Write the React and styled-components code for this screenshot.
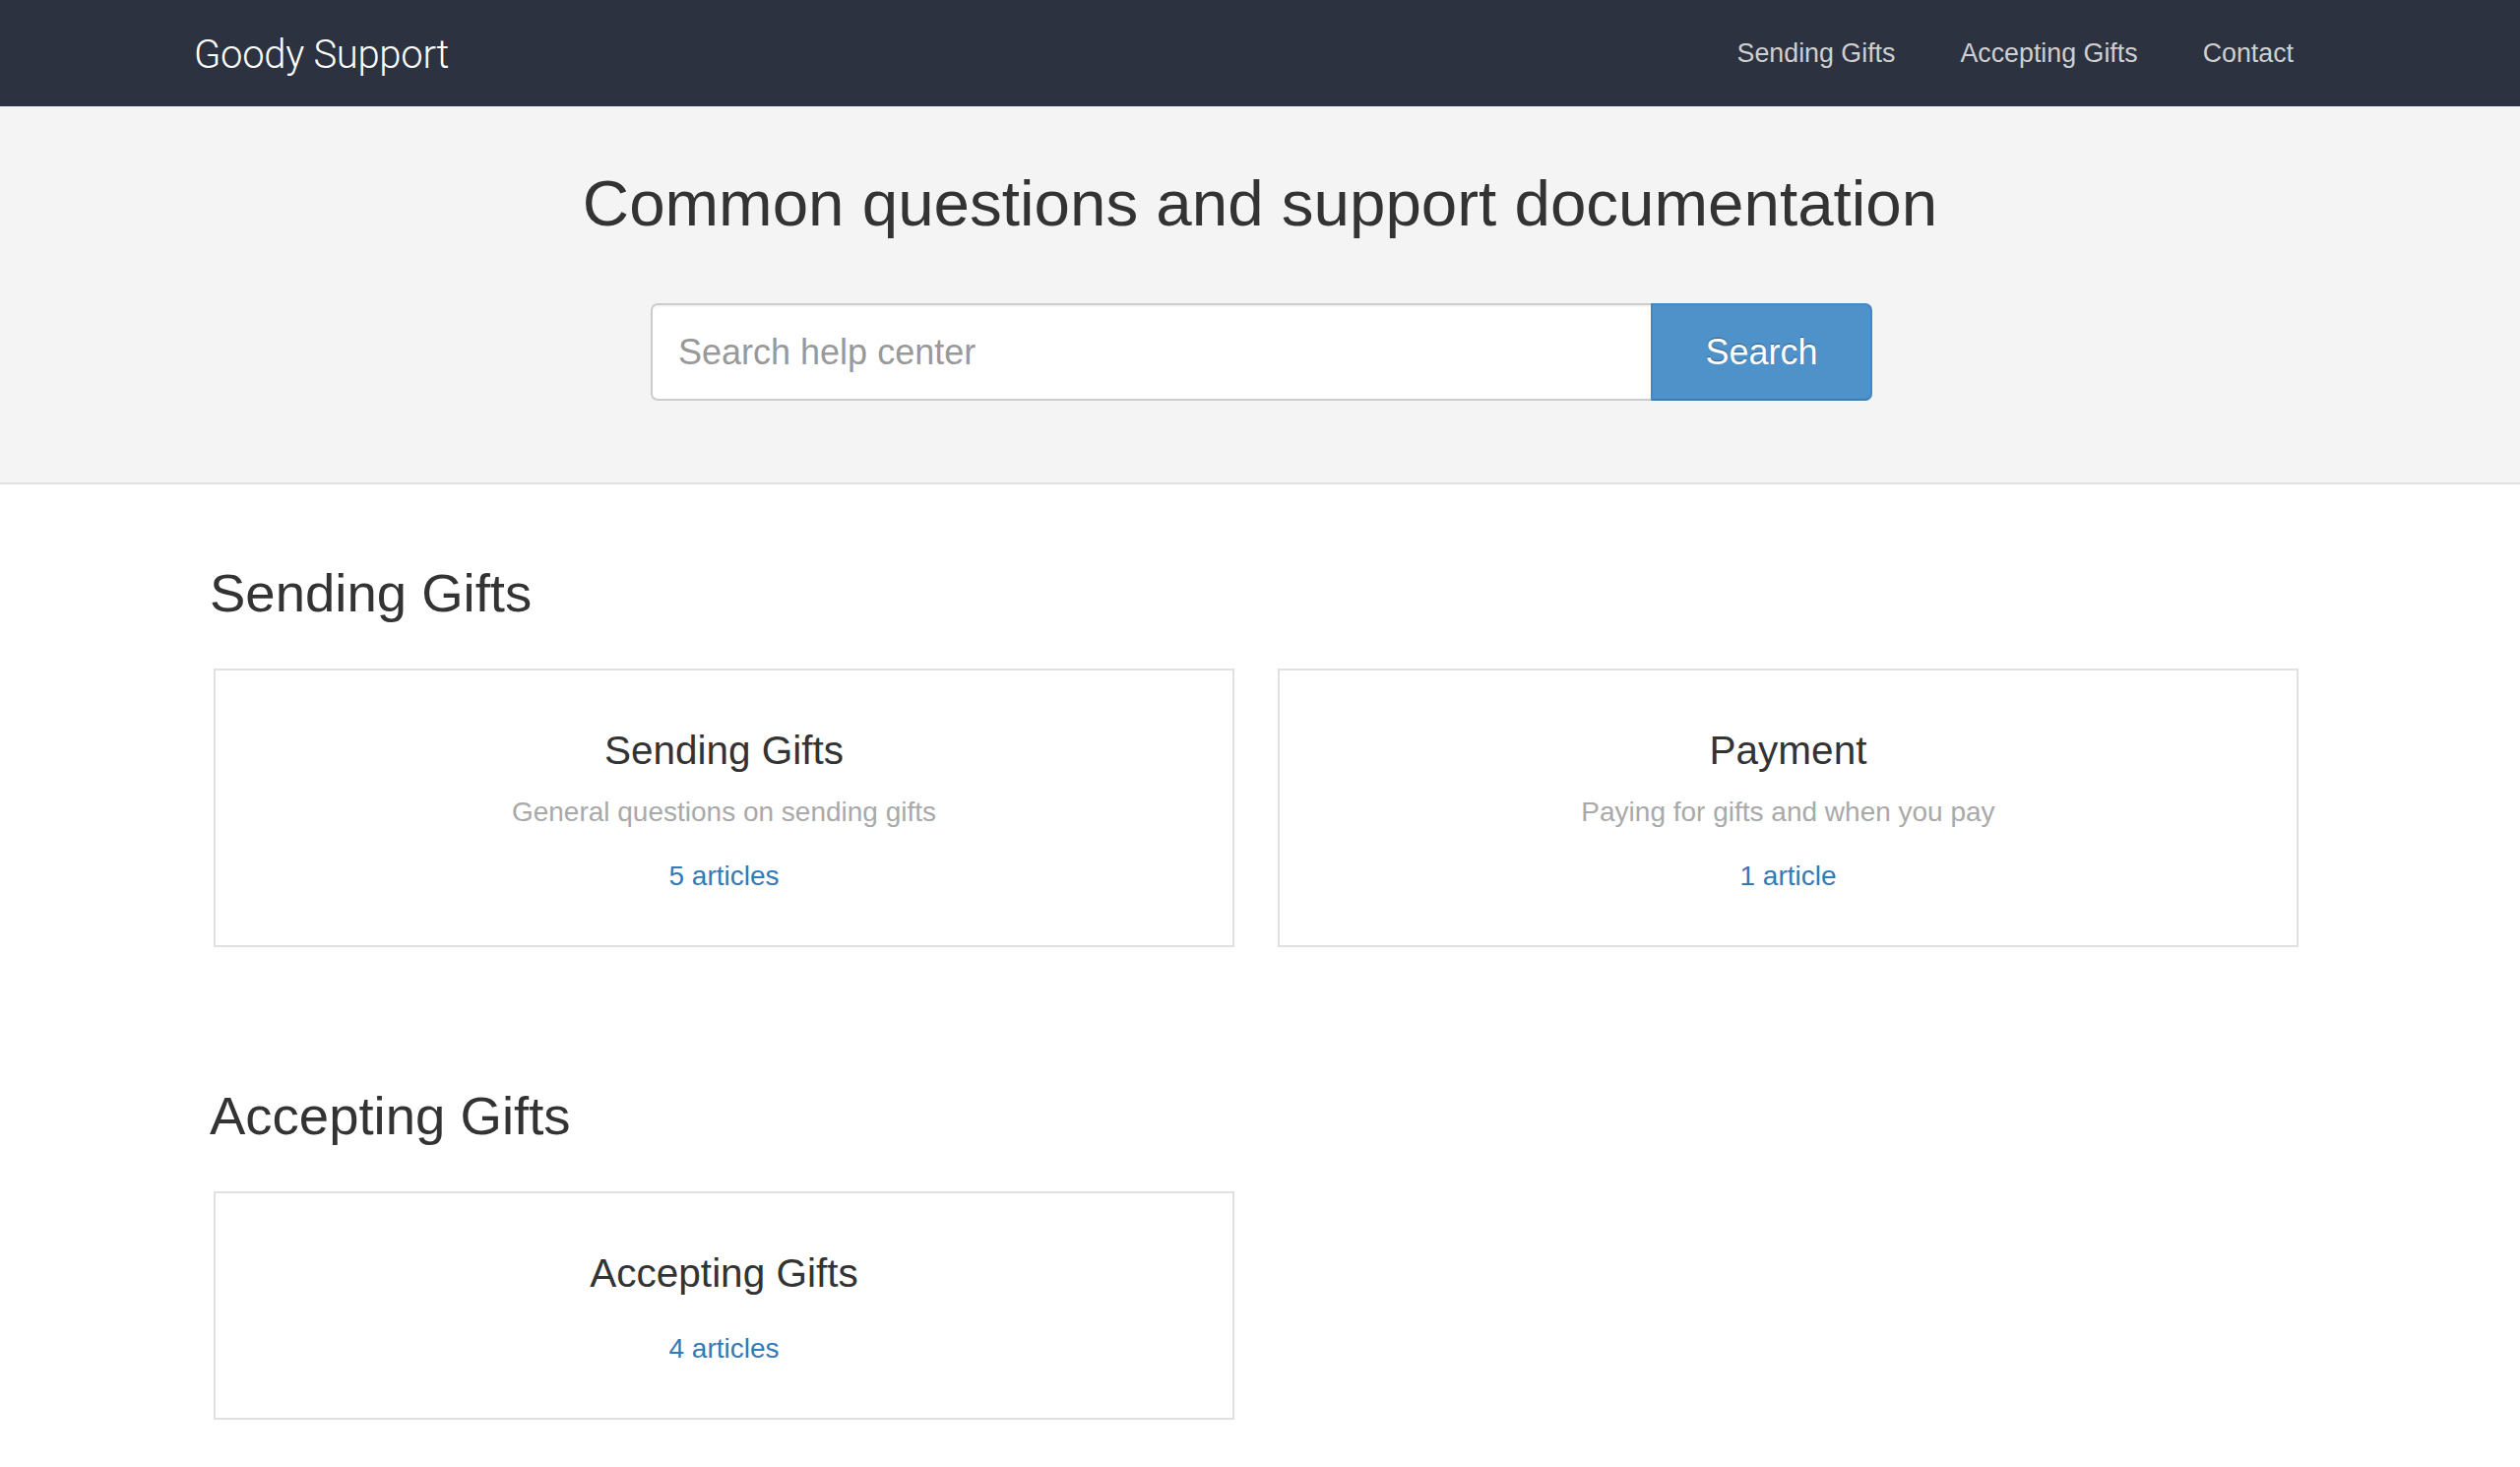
import React from "react";
import styled, { createGlobalStyle } from "styled-components";

const Global = createGlobalStyle`
  html, body { margin: 0; padding: 0; background: #fff; }
  body { font-family: "Liberation Sans", Arial, sans-serif; color: #333; }
  * { box-sizing: border-box; }
`;

const NavBar = styled.header`
  background: #2c323f;
  height: 108px;
`;

const NavInner = styled.div`
  width: 2166px;
  margin: 0 auto;
  height: 100%;
  display: flex;
  align-items: center;
  justify-content: space-between;
`;

const Brand = styled.a`
  font-family: Roboto, "Liberation Sans", sans-serif;
  font-weight: 300;
  font-size: 40px;
  color: #fff;
  text-decoration: none;
  padding-top: 3px;
  letter-spacing: -0.3px;
`;

const NavLinks = styled.nav`
  display: flex;
  align-items: center;
`;

const NavLink = styled.a`
  font-size: 26.8px;
  color: #cfcfd1;
  text-decoration: none;
  padding: 0 33px;
  &:last-child { padding-right: 33px; }
`;

const Hero = styled.section`
  background: #f4f4f4;
  border-bottom: 2px solid #e2e2e2;
  padding: 63px 0 83px;
  display: flex;
  flex-direction: column;
  align-items: center;
`;

const HeroTitle = styled.h1`
  margin: 0 0 65px;
  font-size: 65.5px;
  line-height: 72px;
  font-weight: 400;
  color: #333;
`;

const SearchForm = styled.form`
  display: flex;
  width: 1241px;
  height: 99px;
  margin-left: 3px;
`;

const SearchInput = styled.input`
  flex: 1;
  height: 100%;
  border: 2px solid #cccccc;
  border-right: none;
  border-radius: 7px 0 0 7px;
  padding: 0 26px;
  font-family: "Liberation Sans", Arial, sans-serif;
  font-size: 36px;
  color: #555;
  background: #fff;
  outline: none;
  box-shadow: inset 0 2px 2px rgba(0,0,0,0.04);
  &::placeholder { color: #999; }
`;

const SearchButton = styled.button`
  width: 225px;
  height: 100%;
  border: 2px solid #4587c0;
  border-bottom-color: #3d7cb3;
  border-radius: 0 7px 7px 0;
  background: #4f91c9;
  color: #fff;
  font-family: "Liberation Sans", Arial, sans-serif;
  font-size: 36px;
  text-shadow: 0 -1px 1px rgba(0,0,0,0.35);
  cursor: pointer;
`;

const Container = styled.main`
  width: 2126px;
  margin: 0 auto;
  padding-bottom: 60px;
`;

const Section = styled.section`
  padding-top: 81px;
  padding-bottom: 61px;
  &:last-child { padding-bottom: 0; }
`;

const SectionTitle = styled.h2`
  margin: 0 0 46px -4px;
  font-size: 54.5px;
  line-height: 60px;
  font-weight: 400;
  color: #333;
`;

const CardGrid = styled.div`
  display: grid;
  grid-template-columns: 1037px 1037px;
  gap: 44px;
`;

const Card = styled.a`
  display: flex;
  flex-direction: column;
  align-items: center;
  border: 2px solid #e0e0e0;
  padding: 57px 20px 50px;
  text-decoration: none;
  text-align: center;
`;

const CardTitle = styled.h3`
  margin: 0 0 19px;
  font-size: 40.5px;
  line-height: 48px;
  font-weight: 400;
  color: #333;
`;

const CardDesc = styled.p`
  margin: 0 0 11px;
  font-size: 28px;
  line-height: 40px;
  color: #a9a9a9;
`;

const CardCount = styled.span`
  display: block;
  margin-top: 14px;
  font-size: 28px;
  line-height: 40px;
  color: #337ab7;
`;

const sections = [
  {
    title: "Sending Gifts",
    cards: [
      { title: "Sending Gifts", desc: "General questions on sending gifts", count: "5 articles" },
      { title: "Payment", desc: "Paying for gifts and when you pay", count: "1 article" },
    ],
  },
  {
    title: "Accepting Gifts",
    cards: [{ title: "Accepting Gifts", count: "4 articles" }],
  },
];

export default function App() {
  return (
    <>
      <Global />
      <NavBar>
        <NavInner>
          <Brand href="#">Goody Support</Brand>
          <NavLinks>
            <NavLink href="#">Sending Gifts</NavLink>
            <NavLink href="#">Accepting Gifts</NavLink>
            <NavLink href="#">Contact</NavLink>
          </NavLinks>
        </NavInner>
      </NavBar>
      <Hero>
        <HeroTitle>Common questions and support documentation</HeroTitle>
        <SearchForm onSubmit={(e) => e.preventDefault()}>
          <SearchInput placeholder="Search help center" />
          <SearchButton type="submit">Search</SearchButton>
        </SearchForm>
      </Hero>
      <Container>
        {sections.map((s) => (
          <Section key={s.title}>
            <SectionTitle>{s.title}</SectionTitle>
            <CardGrid>
              {s.cards.map((c) => (
                <Card href="#" key={c.title}>
                  <CardTitle>{c.title}</CardTitle>
                  {c.desc && <CardDesc>{c.desc}</CardDesc>}
                  <CardCount>{c.count}</CardCount>
                </Card>
              ))}
            </CardGrid>
          </Section>
        ))}
      </Container>
    </>
  );
}
